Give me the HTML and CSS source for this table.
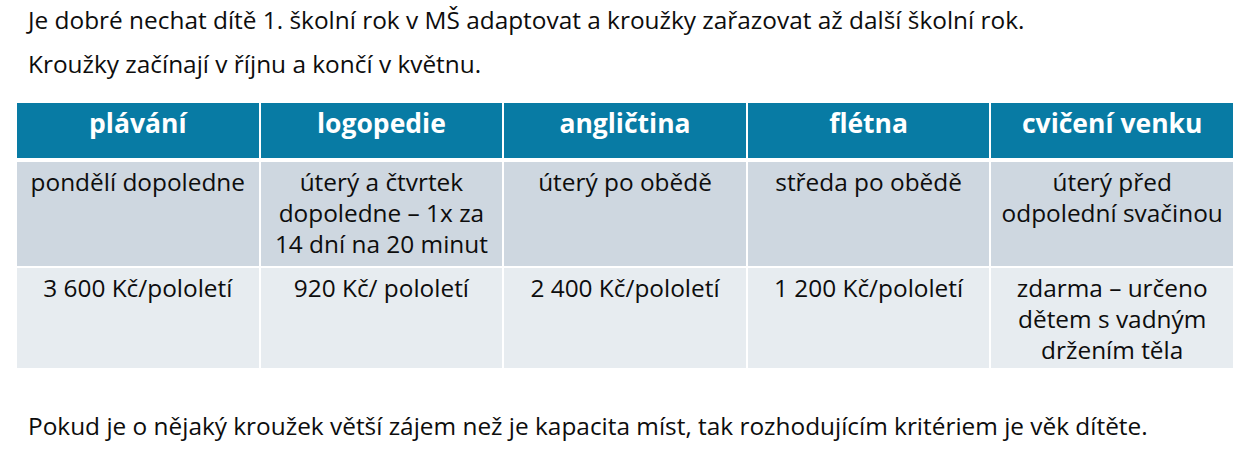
FILE: index.html
```html
<!DOCTYPE html>
<html lang="cs">
<head>
<meta charset="utf-8">
<title>Kroužky</title>
<link rel="stylesheet" href="styles.css">
</head>
<body>
<div class="page">
  <p class="intro">Je dobré nechat dítě 1. školní rok v MŠ adaptovat a kroužky zařazovat až další školní rok.</p>
  <p class="intro second">Kroužky začínají v říjnu a končí v květnu.</p>

  <div class="table">
    <div class="thead">
      <div class="th">plávání</div>
      <div class="th">logopedie</div>
      <div class="th">angličtina</div>
      <div class="th">flétna</div>
      <div class="th">cvičení venku</div>
    </div>
    <div class="tbody">
      <div class="td odd">pondělí dopoledne</div>
      <div class="td odd">úterý a čtvrtek dopoledne – 1x za 14 dní na 20 minut</div>
      <div class="td odd">úterý po obědě</div>
      <div class="td odd">středa po obědě</div>
      <div class="td odd">úterý před odpolední svačinou</div>

      <div class="td even">3 600 Kč/pololetí</div>
      <div class="td even">920 Kč/ pololetí</div>
      <div class="td even">2 400 Kč/pololetí</div>
      <div class="td even">1 200 Kč/pololetí</div>
      <div class="td even">zdarma – určeno dětem s vadným držením těla</div>
    </div>
  </div>

  <p class="note">Pokud je o nějaký kroužek větší zájem než je kapacita míst, tak rozhodujícím kritériem je věk dítěte.</p>
</div>
</body>
</html>
```

FILE: styles.css
```css
html, body {
  margin: 0;
  padding: 0;
  background: #ffffff;
}

body {
  font-family: "Open Sans", "Noto Sans", "Liberation Sans", sans-serif;
  font-size: 24.4px;
  color: #0d0d0d;
}

.page {
  width: 1246px;
  height: 462px;
  padding-top: 5px;
  box-sizing: border-box;
}

.intro {
  margin: 0 0 0 28px;
  line-height: 30px;
}

.intro.second {
  margin-top: 14px;
}

.table {
  margin: 24px 0 0 17px;
  width: 1216px;
  display: flex;
  flex-direction: column;
  gap: 4px;
}

.thead {
  display: grid;
  grid-template-columns: repeat(5, 1fr);
  column-gap: 2px;
  height: 55px;
}

.th {
  background: #087ba4;
  color: #ffffff;
  font-weight: 700;
  font-size: 26.5px;
  line-height: 31px;
  text-align: center;
  padding-top: 4.5px;
  box-sizing: border-box;
}

.tbody {
  display: grid;
  grid-template-columns: repeat(5, 1fr);
  grid-template-rows: 104px 100px;
  gap: 2px;
}

.td {
  text-align: center;
  line-height: 31px;
  padding: 4px 10px 0;
  box-sizing: border-box;
}

.td.odd {
  background: #ced7e0;
}

.td.even {
  background: #e7ecf0;
}

.note {
  margin: 43px 0 0 28px;
  line-height: 30px;
}
```
